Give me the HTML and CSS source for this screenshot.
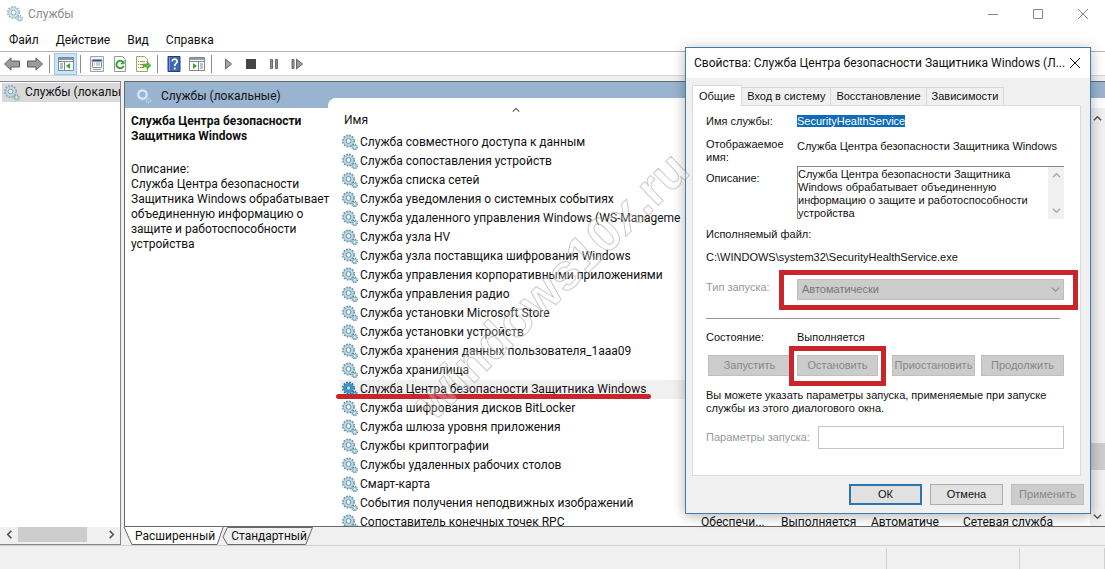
FILE: index.html
```html
<!DOCTYPE html>
<html lang="ru">
<head>
    <meta charset="UTF-8">
    <meta name="viewport" content="width=device-width, initial-scale=1.0">
    <title>Службы</title>
    <link rel="stylesheet" href="styles.css">
</head>
<body>
    <!-- Общие значки -->
    <svg class="sprite" aria-hidden="true">
        <symbol id="gear" viewBox="0 0 16 16">
            <circle cx="6.5" cy="6.5" r="5.6" fill="none" stroke="#5b8ba0" stroke-width="1.8" stroke-dasharray="1.6 1.33"/>
            <circle cx="6.5" cy="6.5" r="3.9" fill="none" stroke="#b9d9e6" stroke-width="2.8"/>
            <circle cx="6.5" cy="6.5" r="5.1" fill="none" stroke="#7fa9ba" stroke-width="0.7"/>
            <circle cx="6.5" cy="6.5" r="2.4" fill="#fff" stroke="#5d8da3" stroke-width="1"/>
            <circle cx="12.6" cy="12.4" r="2.6" fill="none" stroke="#5b8496" stroke-width="1.5" stroke-dasharray="1.2 0.84"/>
            <circle cx="12.6" cy="12.4" r="1.6" fill="#fff" stroke="#92bccd" stroke-width="1.3"/>
        </symbol>
        <symbol id="gear-selected" viewBox="0 0 16 16">
            <circle cx="6.5" cy="6.5" r="5.6" fill="none" stroke="#1d6b9c" stroke-width="1.8" stroke-dasharray="1.6 1.33"/>
            <circle cx="6.5" cy="6.5" r="3.9" fill="none" stroke="#3b93c5" stroke-width="2.8"/>
            <circle cx="6.5" cy="6.5" r="2.2" fill="#b9def2" stroke="#1f6f9f" stroke-width="1"/>
            <circle cx="12.6" cy="12.4" r="2.6" fill="none" stroke="#1d6b9c" stroke-width="1.5" stroke-dasharray="1.2 0.84"/>
            <circle cx="12.6" cy="12.4" r="1.6" fill="#b9def2" stroke="#3b93c5" stroke-width="1.3"/>
        </symbol>
        <symbol id="gear-light" viewBox="0 0 16 16">
            <circle cx="6.5" cy="6.5" r="4.2" fill="none" stroke="#dcebf6" stroke-width="2.2"/>
            <circle cx="6.5" cy="6.5" r="5.7" fill="none" stroke="#aecbe0" stroke-width="1" stroke-dasharray="1.4 1.6"/>
            <circle cx="12.4" cy="12.6" r="2" fill="none" stroke="#bfd7e8" stroke-width="1.6" stroke-dasharray="1.2 0.9"/>
        </symbol>
        <symbol id="left" viewBox="0 0 10 10"><path d="M7 1 3 5l4 4" fill="none" stroke="currentColor" stroke-width="1.8"/></symbol>
        <symbol id="right" viewBox="0 0 10 10"><path d="m3 1 4 4-4 4" fill="none" stroke="currentColor" stroke-width="1.8"/></symbol>
        <symbol id="up" viewBox="0 0 10 10"><path d="m1 7 4-4 4 4" fill="none" stroke="currentColor" stroke-width="1.6"/></symbol>
        <symbol id="down" viewBox="0 0 10 10"><path d="m1 3 4 4 4-4" fill="none" stroke="currentColor" stroke-width="1.6"/></symbol>
    </svg>

    <header class="titlebar">
        <svg class="icon faded"><use href="#gear"/></svg>
        <span class="window-title">Службы</span>
        <div class="window-buttons">
            <button aria-label="Свернуть"><svg viewBox="0 0 12 12"><path d="M1 6.5h10"/></svg></button>
            <button aria-label="Развернуть"><svg viewBox="0 0 12 12"><path d="M1.5 1.5h9v9h-9z"/></svg></button>
            <button aria-label="Закрыть"><svg viewBox="0 0 12 12"><path d="m1 1 10 10M11 1 1 11"/></svg></button>
        </div>
    </header>

    <nav class="menu">
        <button>Файл</button>
        <button>Действие</button>
        <button>Вид</button>
        <button>Справка</button>
    </nav>

    <div class="toolbar">
        <button aria-label="Назад"><svg viewBox="0 0 16 16"><path d="M.5 8 7 1.8V5h8.5v6H7v3.2z" fill="#9b9b9b" stroke="#5f5f5f"/></svg></button>
        <button aria-label="Вперёд"><svg viewBox="0 0 16 16"><path d="M15.5 8 9 1.8V5H.5v6H9v3.2z" fill="#9b9b9b" stroke="#5f5f5f"/></svg></button>
        <span class="separator"></span>
        <button class="pressed" aria-label="Дерево консоли"><svg viewBox="0 0 16 16"><path d="M.5 1.5h15v13H.5z" fill="#fff" stroke="#7c8a97"/><path d="M1 2h14v2H1z" fill="#8496a8"/><path d="M1 5.5h14M6.5 5.5v9" stroke="#7c8a97"/><path d="M2 8h3M2 10h3M2 12h3" stroke="#4a83bd"/><path d="M12 7v6l-4-3z" fill="#3da332"/></svg></button>
        <span class="separator"></span>
        <button aria-label="Свойства"><svg viewBox="0 0 16 16"><path d="M1.5.5h13v15h-13z" fill="#f4f4f4" stroke="#a0a0a0"/><path d="M3.5 3.5h9v8h-9z" fill="#fff" stroke="#7c93a8"/><path d="M3 4h10v1.5H3zM5 7h1M7 7h4M5 9h1M7 9h4M4 13.5h8" stroke="#8fa0b2"/></svg></button>
        <button aria-label="Обновить"><svg viewBox="0 0 16 16"><path d="M2.5.5h8l3 3v12h-11z" fill="#fff" stroke="#969696"/><path d="M11 6.2a3.7 3.7 0 1 0 .6 3.6" fill="none" stroke="#39a339" stroke-width="2"/><path d="M12.5 3.8v4.5H8z" fill="#39a339"/></svg></button>
        <button aria-label="Экспорт"><svg viewBox="0 0 16 16"><path d="M1.5.5h8l3 3v12h-11z" fill="#fffdf0" stroke="#a5a077"/><path d="M3 5.5h1M5 5.5h5M3 8.5h1M5 8.5h3M3 11.5h1M5 11.5h4" stroke="#8b9350"/><path d="M8 8h4V5.5L16 9.5 12 13.5V11H8z" fill="#55bd4a" stroke="#368a30" stroke-width=".5"/></svg></button>
        <span class="separator"></span>
        <button aria-label="Помощь"><svg viewBox="0 0 16 16"><path d="M2 .5h12v15H2z" fill="#3d66b5" stroke="#24407c"/><path d="M3.5 1v14" stroke="#7998d2"/><path d="M6.2 5.5c.2-3.500 5.300-3 4.900.1-.2 1.900-2.400 1.900-2.400 4.300M8.700 11.500v2" fill="none" stroke="#fff" stroke-width="1.7"/></svg></button>
        <button aria-label="Область действий"><svg viewBox="0 0 16 16"><path d="M.5 1.5h15v13H.5z" fill="#fff" stroke="#858585"/><path d="M1 2h14v2H1z" fill="#91a0ad"/><path d="M1 5.5h14M9.5 5.5v9" stroke="#858585"/><path d="M11 8h3M11 10h3M11 12h3" stroke="#6f8da8"/><path d="M4 7v6l4-3z" fill="#3da332"/></svg></button>
        <span class="separator"></span>
        <button aria-label="Запуск"><svg viewBox="0 0 16 16"><path d="m5.5 3 6 5-6 5z" fill="#a6a6a6" stroke="#666"/></svg></button>
        <button aria-label="Остановка"><svg viewBox="0 0 16 16"><path d="M3 3h10v10H3z" fill="#444"/></svg></button>
        <button aria-label="Пауза"><svg viewBox="0 0 16 16"><path d="M4.5 3.5h2v9h-2zM9.5 3.5h2v9h-2z" fill="#999" stroke="#666"/></svg></button>
        <button aria-label="Перезапуск"><svg viewBox="0 0 16 16"><path d="M3 3.5h2v9H3zM7.5 3l6 5-6 5z" fill="#999" stroke="#666"/></svg></button>
    </div>

    <main class="workspace">
        <aside class="tree">
            <a class="tree-item" href="#services"><svg class="icon faded"><use href="#gear"/></svg><span>Службы (локальные)</span></a>
            <div class="scroll-x">
                <button aria-label="Влево"><svg><use href="#left"/></svg></button>
                <span class="thumb-x"></span>
                <button aria-label="Вправо"><svg><use href="#right"/></svg></button>
            </div>
        </aside>

        <div class="content" id="services">
            <section class="pane">
                <div class="pane-header"><svg class="icon"><use href="#gear-light"/></svg><span>Службы (локальные)</span></div>
                <div class="details">
                    <h2>Служба Центра безопасности Защитника Windows</h2>
                    <p>Описание:<br>Служба Центра безопасности Защитника Windows обрабатывает объединенную информацию о защите и работоспособности устройства</p>
                </div>
                <div class="list">
                    <svg class="sort-mark"><use href="#up"/></svg>
                    <table class="services">
                        <colgroup><col class="col-name"><col class="col-text"><col class="col-state"><col class="col-type"><col></colgroup>
                        <thead><tr><th>Имя</th><th></th><th></th><th></th><th></th></tr></thead>
                        <tbody>
                            <tr><td><svg><use href="#gear"/></svg>Служба совместного доступа к данным</td></tr>
                            <tr><td><svg><use href="#gear"/></svg>Служба сопоставления устройств</td></tr>
                            <tr><td><svg><use href="#gear"/></svg>Служба списка сетей</td></tr>
                            <tr><td><svg><use href="#gear"/></svg>Служба уведомления о системных событиях</td></tr>
                            <tr><td><svg><use href="#gear"/></svg>Служба удаленного управления Windows (WS-Manageme</td></tr>
                            <tr><td><svg><use href="#gear"/></svg>Служба узла HV</td></tr>
                            <tr><td><svg><use href="#gear"/></svg>Служба узла поставщика шифрования Windows</td></tr>
                            <tr><td><svg><use href="#gear"/></svg>Служба управления корпоративными приложениями</td></tr>
                            <tr><td><svg><use href="#gear"/></svg>Служба управления радио</td></tr>
                            <tr><td><svg><use href="#gear"/></svg>Служба установки Microsoft Store</td></tr>
                            <tr><td><svg><use href="#gear"/></svg>Служба установки устройств</td></tr>
                            <tr><td><svg><use href="#gear"/></svg>Служба хранения данных пользователя_1aaa09</td></tr>
                            <tr><td><svg><use href="#gear"/></svg>Служба хранилища</td></tr>
                            <tr class="selected"><td><svg><use href="#gear-selected"/></svg>Служба Центра безопасности Защитника Windows<span class="underline"></span></td></tr>
                            <tr><td><svg><use href="#gear"/></svg>Служба шифрования дисков BitLocker</td></tr>
                            <tr><td><svg><use href="#gear"/></svg>Служба шлюза уровня приложения</td></tr>
                            <tr><td><svg><use href="#gear"/></svg>Службы криптографии</td></tr>
                            <tr><td><svg><use href="#gear"/></svg>Службы удаленных рабочих столов</td></tr>
                            <tr><td><svg><use href="#gear"/></svg>Смарт-карта</td></tr>
                            <tr><td><svg><use href="#gear"/></svg>События получения неподвижных изображений</td></tr>
                            <tr><td><svg><use href="#gear"/></svg>Сопоставитель конечных точек RPC</td><td>Обеспечи...</td><td>Выполняется</td><td>Автоматиче</td><td>Сетевая служба</td></tr>
                        </tbody>
                    </table>
                </div>
                <div class="scroll-y">
                    <button aria-label="Вверх"><svg><use href="#up"/></svg></button>
                    <span class="thumb-y"></span>
                    <button aria-label="Вниз"><svg><use href="#down"/></svg></button>
                </div>
            </section>
            <div class="view-tabs">
                <button class="view-tab active"><svg viewBox="0 0 100 18" preserveAspectRatio="none"><path d="M0 0 8 17.5H94L100 0"/></svg><span>Расширенный</span></button>
                <button class="view-tab"><svg viewBox="0 0 100 18" preserveAspectRatio="none"><path d="M0 10 5 .5H99.5L92 17.5H5L0 10"/></svg><span>Стандартный</span></button>
            </div>
        </div>
    </main>

    <footer class="statusbar"><span></span><span></span><span></span></footer>

    <section class="dialog" role="dialog" aria-labelledby="dialog-title">
        <header class="dialog-header">
            <h1 id="dialog-title">Свойства: Служба Центра безопасности Защитника Windows (Л...</h1>
            <button aria-label="Закрыть"><svg viewBox="0 0 12 12"><path d="m1 1 10 10M11 1 1 11"/></svg></button>
        </header>
        <div class="dialog-body">
            <div class="tabs" role="tablist">
                <button class="tab active" role="tab">Общие</button>
                <button class="tab" role="tab">Вход в систему</button>
                <button class="tab" role="tab">Восстановление</button>
                <button class="tab" role="tab">Зависимости</button>
            </div>
            <form class="panel">
                <div class="field name-field"><span>Имя службы:</span><span><mark>SecurityHealthService</mark></span></div>
                <div class="field display-field"><span>Отображаемое имя:</span><span>Служба Центра безопасности Защитника Windows</span></div>
                <div class="field description-field">
                    <label for="description">Описание:</label>
                    <div class="description">
                        <textarea id="description" readonly>Служба Центра безопасности Защитника
Windows обрабатывает объединенную
информацию о защите и работоспособности
устройства</textarea>
                        <div class="mini-scroll"><svg><use href="#up"/></svg><svg><use href="#down"/></svg></div>
                    </div>
                </div>
                <div class="path">Исполняемый файл:</div>
                <div class="path">C:\WINDOWS\system32\SecurityHealthService.exe</div>
                <div class="field type-field">
                    <label class="disabled" for="start-type">Тип запуска:</label>
                    <div class="marked">
                        <select id="start-type" disabled><option>Автоматически</option></select>
                        <svg class="select-arrow"><use href="#down"/></svg>
                    </div>
                </div>
                <hr>
                <div class="field"><span>Состояние:</span><span>Выполняется</span></div>
                <div class="actions">
                    <button type="button" disabled>Запустить</button>
                    <div class="marked"><button type="button" disabled>Остановить</button></div>
                    <button type="button" disabled>Приостановить</button>
                    <button type="button" disabled>Продолжить</button>
                </div>
                <p class="hint">Вы можете указать параметры запуска, применяемые при запуске службы из этого диалогового окна.</p>
                <div class="params">
                    <label class="disabled" for="params">Параметры запуска:</label>
                    <input id="params" type="text" disabled>
                </div>
            </form>
            <div class="dialog-buttons">
                <button class="primary">ОК</button>
                <button>Отмена</button>
                <button disabled>Применить</button>
            </div>
        </div>
    </section>

    <svg class="watermark" viewBox="0 0 300 300" aria-hidden="true">
        <text x="0" y="0" transform="translate(29 277) rotate(-44)">windows10x.ru</text>
    </svg>
</body>
</html>
```

FILE: styles.css
```css
:root {
    --ui-font: Roboto, "Noto Sans", sans-serif;
    --dialog-font: "Liberation Sans", Arial, sans-serif;
    --gray: #f0f0f0;
    --line: #828790;
    --blue: #99b4d1;
    --red: #c9252d;
}

* {
    box-sizing: border-box;
}
body {
    margin: 0;
    height: 100vh;
    display: flex;
    flex-direction: column;
    position: relative;
    overflow: hidden;
    background-color: var(--gray);
    color: #111;
    font-family: var(--ui-font);
    font-size: 12px;
    line-height: 15px;
}
button {
    font: inherit;
    color: inherit;
    border: none;
    background: none;
    padding: 0;
}
svg {
    display: block;
}
.sprite {
    position: absolute;
    width: 0;
    height: 0;
}
.icon {
    width: 16px;
    height: 16px;
    flex: none;
}
.faded {
    opacity: 0.7;
}

/* Окно */
.titlebar {
    display: flex;
    align-items: center;
    height: 28px;
    padding-left: 7px;
    background-color: white;
    color: #8c8c8c;
}
.window-title {
    margin-left: 5px;
}
.window-buttons {
    display: flex;
    margin-left: auto;
}
.window-buttons button {
    width: 45px;
    height: 28px;
    display: flex;
    align-items: center;
    justify-content: center;
}
.window-buttons svg, .dialog-header svg {
    width: 12px;
    height: 12px;
    fill: none;
    stroke: #888;
}
.menu {
    display: flex;
    align-items: center;
    gap: 17px;
    height: 23px;
    padding: 2px 0 0 9px;
    background-color: white;
}
.toolbar {
    display: flex;
    align-items: center;
    height: 25px;
    border-top: 1px solid #b5b5b5;
    border-bottom: 1px solid #d5d5d5;
    background-color: white;
}
.toolbar button {
    width: 23px;
    height: 22px;
    display: flex;
    align-items: center;
    justify-content: center;
}
.toolbar svg {
    width: 16px;
    height: 16px;
}
.toolbar .pressed {
    background-color: #cce4f7;
    border: 1px solid #99c9ef;
}
.separator {
    width: 1px;
    height: 18px;
    margin: 0 4px 0 3px;
    background-color: #8c8c8c;
}
.workspace {
    flex: 1;
    min-height: 0;
    display: flex;
    gap: 3px;
    padding-top: 5px;
}

/* Дерево */
.tree {
    width: 121px;
    display: flex;
    flex-direction: column;
    justify-content: space-between;
    background-color: white;
    border: 1px solid var(--line);
    border-left: none;
}
.tree-item {
    display: flex;
    align-items: center;
    gap: 5px;
    height: 19px;
    margin: 1px 0 0 2px;
    padding-left: 2px;
    background-color: #d9d9d9;
    color: inherit;
    text-decoration: none;
    white-space: nowrap;
    overflow: hidden;
}
.scroll-x {
    display: flex;
    height: 17px;
    padding-bottom: 2px;
    background-color: var(--gray);
    color: #555;
}
.scroll-x button, .scroll-y button {
    width: 18px;
    display: flex;
    align-items: center;
    justify-content: center;
}
.scroll-x svg, .scroll-y svg, .mini-scroll svg {
    width: 9px;
    height: 9px;
}
.thumb-x {
    width: 69px;
    margin-right: auto;
    background-color: #cdcdcd;
}

/* Список служб */
.content {
    flex: 1;
    min-width: 0;
    display: flex;
    flex-direction: column;
}
.pane {
    flex: 1;
    min-height: 0;
    display: grid;
    grid-template-columns: 203px 1fr 15px;
    grid-template-rows: 16px 10px 1fr;
    border: 1px solid #696969;
    border-right: none;
    background-color: white;
    overflow: hidden;
}
.pane-header {
    grid-area: 1 / 1 / 3 / 4;
    display: flex;
    align-items: center;
    gap: 9px;
    padding: 2px 0 0 11px;
    background-color: var(--blue);
}
.details {
    grid-area: 3 / 1;
    z-index: 1;
    padding: 6px 0 0 6px;
}
.details h2 {
    margin: 0 0 18px;
    font-size: 12px;
    line-height: 15px;
}
.details p {
    margin: 0 -8px 0 0;
}
.list {
    grid-area: 2 / 2 / 4 / 3;
    position: relative;
    min-height: 0;
    overflow: hidden;
    padding-left: 12px;
    background-color: white;
    border-top-left-radius: 8px;
}
.sort-mark {
    position: absolute;
    left: 183px;
    top: 8px;
    width: 10px;
    height: 8px;
    color: #666;
}
.services {
    width: 100%;
    table-layout: fixed;
    border-collapse: collapse;
    white-space: nowrap;
}
.services th {
    height: 35px;
    padding: 9px 0 0 4px;
    font-weight: normal;
    text-align: left;
}
.services td {
    height: 19px;
    padding: 0;
}
.services td svg {
    display: inline-block;
    width: 16px;
    height: 17px;
    margin: 0 2px 0 2px;
    vertical-align: middle;
}
.col-name {
    width: 361px;
}
.col-text {
    width: 80px;
}
.col-state {
    width: 90px;
}
.col-type {
    width: 92px;
}
.selected td {
    position: relative;
    background-color: #f0f0f0;
}
.underline {
    position: absolute;
    left: -4px;
    bottom: 0;
    width: 315px;
    height: 5px;
    border-radius: 3px;
    background-color: var(--red);
}
.scroll-y {
    grid-area: 2 / 3 / 4 / 4;
    display: flex;
    flex-direction: column;
    border-top: 10px solid white;
    background-color: var(--gray);
    color: #555;
}
.scroll-y button {
    width: 15px;
    height: 20px;
}
.thumb-y {
    height: 27px;
    margin: auto 0 36px;
    background-color: #cdcdcd;
}
.view-tabs {
    display: flex;
    height: 18px;
}
.view-tab {
    position: relative;
    padding: 0 8px 0 11px;
    line-height: 16px;
}
.view-tab + .view-tab {
    padding: 0 6px 0 8px;
}
.view-tab svg {
    position: absolute;
    inset: 0;
    width: 100%;
    height: 100%;
    overflow: visible;
    fill: var(--gray);
    stroke: #696969;
}
.view-tab path {
    vector-effect: non-scaling-stroke;
}
.view-tab.active svg {
    fill: white;
}
.view-tab span {
    position: relative;
}
.statusbar {
    display: flex;
    justify-content: flex-end;
    height: 24px;
    padding-top: 2px;
    border-top: 1px solid #d0d0d0;
}
.statusbar span {
    width: 133px;
    border-left: 1px solid #d0d0d0;
}
.statusbar span:nth-child(2) {
    width: 85px;
}
.statusbar span:last-child {
    width: 1px;
}

/* Окно свойств */
.dialog {
    position: absolute;
    top: 47px;
    right: 14px;
    width: 406px;
    background-color: var(--gray);
    border: 1px solid #3f7cae;
    box-shadow: 0 2px 12px rgba(0, 0, 0, 0.3);
}
.dialog-header {
    display: flex;
    align-items: center;
    justify-content: space-between;
    height: 30px;
    padding: 0 9px 0 8px;
    background-color: white;
}
.dialog-header h1 {
    margin: 0;
    font-size: 12px;
    font-weight: normal;
    white-space: nowrap;
}
.dialog-header svg {
    stroke: #111;
}
.dialog-body {
    padding: 7px 6px 8px;
    font-family: var(--dialog-font);
    font-size: 11px;
    line-height: 13px;
}
.tabs {
    display: flex;
    align-items: flex-end;
    height: 20px;
}
.tab {
    height: 18px;
    padding: 0 5px;
    border: 1px solid #d9d9d9;
    border-left: none;
    border-bottom: none;
}
.tab.active {
    height: 21px;
    margin-bottom: -1px;
    padding: 0 6px;
    border-left: 1px solid #d9d9d9;
    background-color: white;
    position: relative;
}
.panel {
    margin-right: 3px;
    padding: 9px 16px 26px 13px;
    border: 1px solid #dcdcdc;
    background-color: white;
}
.field {
    display: grid;
    grid-template-columns: 91px 1fr;
    align-items: center;
}
.name-field {
    margin-bottom: 10px;
}
.field mark {
    background-color: #0f6cb6;
    color: white;
}
.display-field {
    align-items: start;
    margin-bottom: 2px;
    white-space: nowrap;
}
.display-field span:first-child {
    white-space: normal;
}
.display-field span:last-child {
    padding-top: 2px;
}
.description-field {
    align-items: start;
    margin-bottom: 9px;
}
.description-field label {
    padding-top: 6px;
}
.description {
    display: flex;
    height: 53px;
    border-top: 1px solid #888;
    border-left: 1px solid #888;
}
.description textarea {
    flex: 1;
    min-width: 0;
    padding: 1px 0 0;
    border: none;
    resize: none;
    overflow: hidden;
    white-space: pre;
    color: inherit;
    font: inherit;
}
.mini-scroll {
    width: 16px;
    display: flex;
    flex-direction: column;
    align-items: center;
    justify-content: space-between;
    padding: 4px 0;
    background-color: var(--gray);
    color: #aaa;
}
.path {
    margin-bottom: 10px;
}
.disabled {
    color: #999;
}
.type-field {
    margin-top: 15px;
    align-items: start;
}
.type-field label {
    padding-top: 2px;
}
.marked {
    position: relative;
}
.marked::after {
    content: "";
    position: absolute;
    inset: -9px -14px -10px -18px;
    border: 5px solid var(--red);
    pointer-events: none;
}
select {
    display: block;
    width: 100%;
    height: 21px;
    padding: 0 4px;
    appearance: none;
    border: 1px solid #bfbfbf;
    border-radius: 0;
    background-color: #ccc;
    color: #777;
    font: inherit;
    opacity: 1;
}
.select-arrow {
    position: absolute;
    right: 4px;
    top: 6px;
    width: 9px;
    height: 9px;
    color: #999;
}
.panel hr {
    margin: 18px 4px 12px 0;
    border: none;
    border-top: 1px solid #999;
}
.actions {
    display: flex;
    gap: 6px;
    margin: 11px 0 13px 2px;
}
.actions > * {
    flex: 1 1 0;
    min-width: 0;
}
.actions button {
    width: 100%;
    height: 21px;
    border: 1px solid #bfbfbf;
    background-color: #ccc;
    color: #888;
    white-space: nowrap;
}
.actions .marked {
    margin-right: 8px;
}
.actions .marked::after {
    inset: -9px -8px -10px -8px;
}
.hint {
    margin: 0 0 11px 0;
}
.params {
    display: flex;
    align-items: center;
    gap: 8px;
}
.params input {
    flex: 1;
    min-width: 0;
    height: 23px;
    border: 1px solid #c4c4c4;
    background-color: white;
}
.dialog-buttons {
    display: flex;
    justify-content: flex-end;
    gap: 8px;
    margin-top: 8px;
}
.dialog-buttons button {
    width: 73px;
    height: 21px;
    border: 1px solid #adadad;
    background-color: #e1e1e1;
}
.dialog-buttons .primary {
    border: 2px solid #2a76ae;
}
.dialog-buttons button:disabled {
    border-color: #bfbfbf;
    background-color: #ccc;
    color: #888;
}

/* Водяной знак */
.watermark {
    position: absolute;
    left: 405px;
    top: 145px;
    width: 300px;
    height: 300px;
    overflow: visible;
    pointer-events: none;
}
.watermark text {
    font-family: var(--dialog-font);
    font-size: 50px;
    font-weight: bold;
    fill: rgba(255, 255, 255, 0.25);
    stroke: rgba(130, 120, 120, 0.4);
    stroke-width: 1px;
}
```
